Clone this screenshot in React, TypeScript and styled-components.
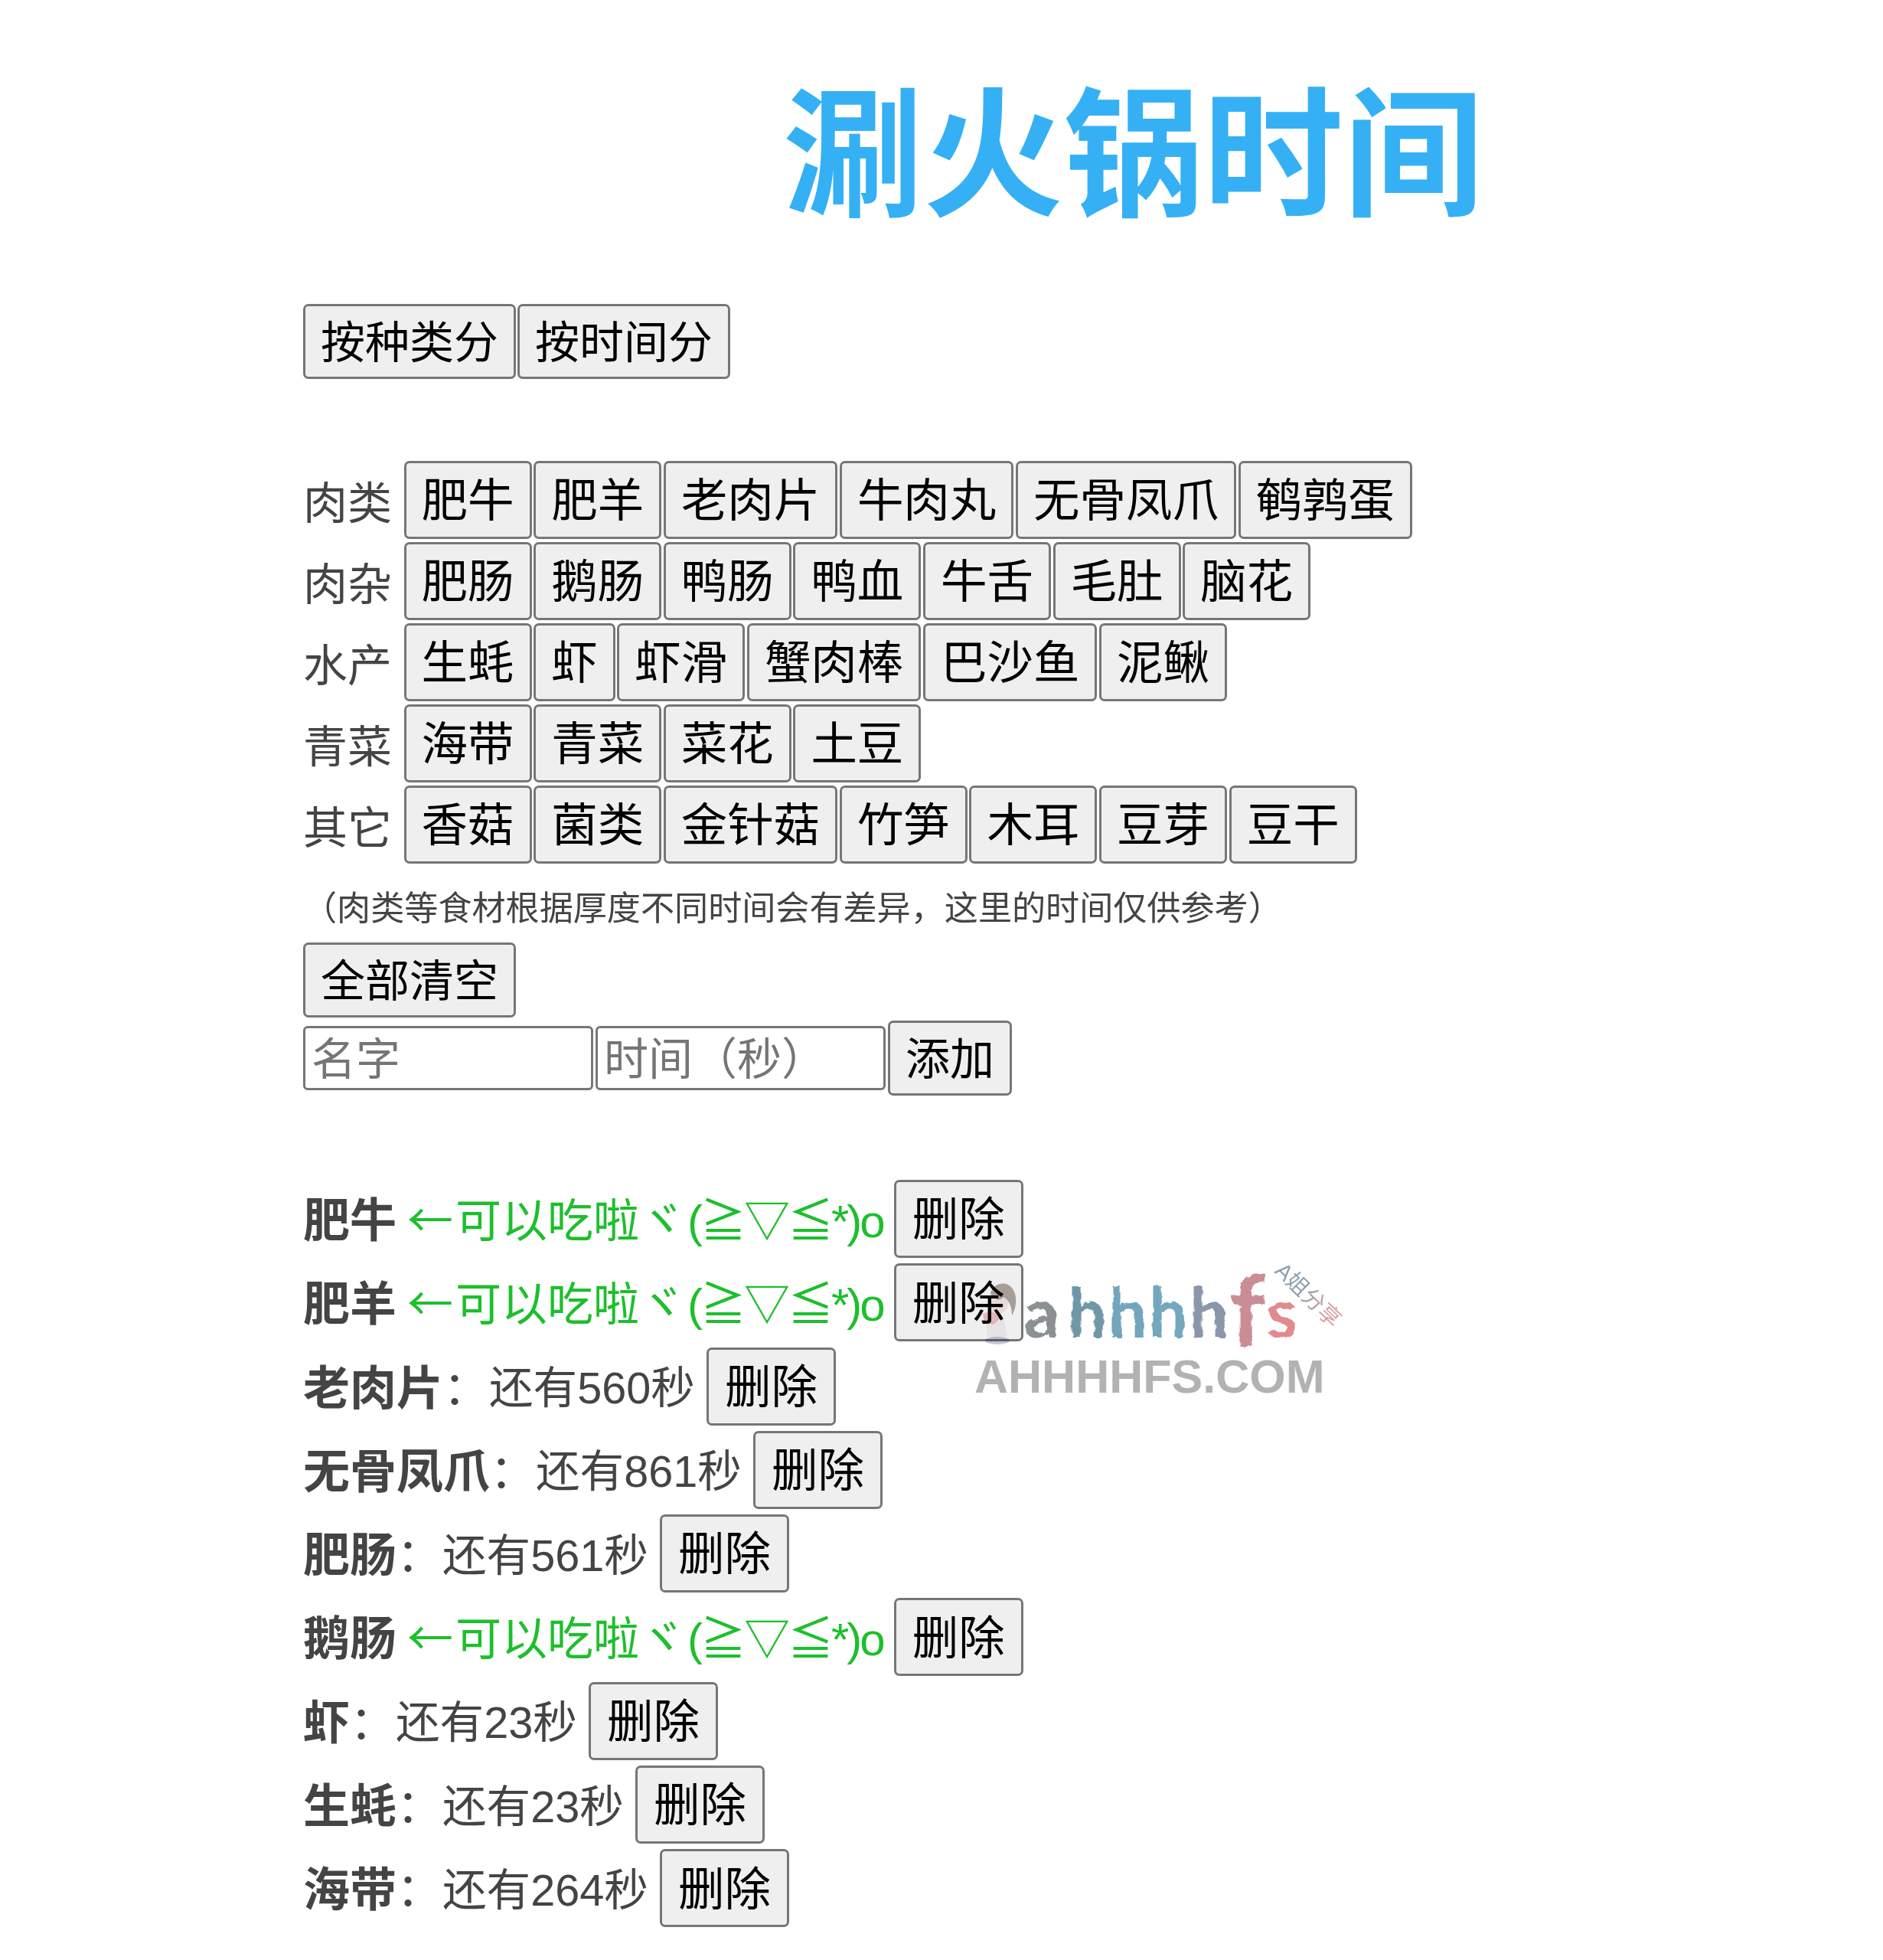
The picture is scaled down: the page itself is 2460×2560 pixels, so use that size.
import React from "react";
import styled, { createGlobalStyle } from "styled-components";

const SANS = `"Liberation Sans", "Noto Sans CJK SC", sans-serif`;

const foodGroups = [
  { label: "肉类", items: ["肥牛", "肥羊", "老肉片", "牛肉丸", "无骨凤爪", "鹌鹑蛋"] },
  { label: "肉杂", items: ["肥肠", "鹅肠", "鸭肠", "鸭血", "牛舌", "毛肚", "脑花"] },
  { label: "水产", items: ["生蚝", "虾", "虾滑", "蟹肉棒", "巴沙鱼", "泥鳅"] },
  { label: "青菜", items: ["海带", "青菜", "菜花", "土豆"] },
  { label: "其它", items: ["香菇", "菌类", "金针菇", "竹笋", "木耳", "豆芽", "豆干"] },
];

const timers = [
  { name: "肥牛" },
  { name: "肥羊" },
  { name: "老肉片", left: 560 },
  { name: "无骨凤爪", left: 861 },
  { name: "肥肠", left: 561 },
  { name: "鹅肠" },
  { name: "虾", left: 23 },
  { name: "生蚝", left: 23 },
  { name: "海带", left: 264 },
];

const brandLetters = [
  { ch: "a", color: "#8b9093", width: 57 },
  { ch: "h", color: "#6f97a8", width: 53 },
  { ch: "h", color: "#73a5bb", width: 53 },
  { ch: "h", color: "#75a7bd", width: 53 },
  { ch: "h", color: "#8a97ab", width: 53 },
  { ch: "f", color: "#cb8d95", width: 48, tall: true },
  { ch: "s", color: "#e08b8d", width: 40 },
];

const App: React.FC = () => {
  return (
    <Page>
      <GlobalStyle />
      <Title>涮火锅时间</Title>

      <Toolbar>
        <Button $size="small">按种类分</Button>
        <Button $size="small">按时间分</Button>
      </Toolbar>

      <FoodTable>
        {foodGroups.map((group) => (
          <FoodRow key={group.label}>
            <FoodLabel>{group.label}</FoodLabel>
            {group.items.map((item) => (
              <Button key={item}>{item}</Button>
            ))}
          </FoodRow>
        ))}
      </FoodTable>

      <Note>（肉类等食材根据厚度不同时间会有差异，这里的时间仅供参考）</Note>

      <ClearRow>
        <Button $size="small">全部清空</Button>
      </ClearRow>

      <AddForm>
        <TextInput placeholder="名字" />
        <TextInput placeholder="时间（秒）" />
        <Button $size="small">添加</Button>
      </AddForm>

      <TimerList>
        {timers.map((timer) => (
          <TimerRow key={timer.name}>
            <TimerName>{timer.name}</TimerName>
            {timer.left === undefined ? (
              <Ready>
                <ReadyArrow>←</ReadyArrow>可以吃啦ヾ<Kaomoji>(≧▽≦*)o</Kaomoji>
              </Ready>
            ) : (
              <>
                <Colon>：</Colon>
                <Remaining>还有{timer.left}秒</Remaining>
              </>
            )}
            <DeleteButton>删除</DeleteButton>
          </TimerRow>
        ))}
      </TimerList>

      <Watermark aria-hidden="true">
        <FilterDefs>
          <filter id="rough">
            <feTurbulence type="fractalNoise" baseFrequency="0.09" numOctaves="2" seed="4" />
            <feDisplacementMap in="SourceGraphic" scale="7" />
          </filter>
        </FilterDefs>
        <Mascot viewBox="0 0 50 84">
          <ellipse cx="25" cy="77" rx="16" ry="5" fill="#b9bdd2" />
          <path d="M10 52 L34 50 L38 72 L12 72 Z" fill="#f4f1f1" />
          <path d="M6 42 L24 36 L31 46 L20 56 L8 54 Z" fill="#eeb4b8" />
          <ellipse cx="26" cy="28" rx="13" ry="14" fill="#f7e6df" />
          <path d="M16 16 C18 2 36 -2 44 8 C52 18 50 34 44 44 C44 32 40 24 33 20 C28 26 22 24 16 16 Z" fill="#a59a92" />
          <circle cx="21" cy="31" r="1.4" fill="#555" />
          <circle cx="31" cy="31" r="1.4" fill="#555" />
        </Mascot>
        <BrandWord>
          {brandLetters.map((letter, i) => (
            <BrandLetter key={i} $color={letter.color} $width={letter.width} $tall={letter.tall}>
              {letter.ch}
            </BrandLetter>
          ))}
        </BrandWord>
        <BrandTag>A姐分享</BrandTag>
        <BrandSite>AHHHHFS.COM</BrandSite>
      </Watermark>
    </Page>
  );
};

const GlobalStyle = createGlobalStyle`
  html, body {
    margin: 0;
    background: #fff;
  }
  body {
    font-family: ${SANS};
    color: #444;
  }
`;

const Page = styled.div`
  position: relative;
  width: 2460px;
  height: 2560px;
  box-sizing: border-box;
  padding: 108px 0 0 396px;
  overflow: hidden;
`;

const Title = styled.h1`
  margin: 0 0 96px 627px;
  font-size: 183px;
  line-height: 193px;
  font-weight: 600;
  color: #35b0f5;
  white-space: nowrap;
`;

const Toolbar = styled.div`
  display: flex;
  gap: 2px;
  margin-bottom: 107px;
`;

const Button = styled.button<{ $size?: "small" }>`
  box-sizing: border-box;
  flex: none;
  height: ${({ $size }) => ($size === "small" ? "98px" : "102px")};
  padding: 3px 20px 0;
  border: 3px solid #767676;
  border-radius: 7px;
  background: #efefef;
  color: #000;
  font-family: ${SANS};
  font-size: ${({ $size }) => ($size === "small" ? "58px" : "60.5px")};
  line-height: 1;
`;

const DeleteButton = styled(Button)`
  margin-left: 15px;
  padding: 3px 21px 0;
`;

const FoodTable = styled.div`
  display: flex;
  flex-direction: column;
  gap: 4px;
`;

const FoodRow = styled.div`
  display: flex;
  align-items: center;
  gap: 2.6px;
`;

const FoodLabel = styled.span`
  width: 129px;
  flex: none;
  font-size: 58px;
  color: #444;
`;

const Note = styled.div`
  margin-top: 27px;
  height: 76px;
  font-size: 44.1px;
  line-height: 64px;
  color: #444;
  white-space: nowrap;
`;

const ClearRow = styled.div`
  display: flex;
`;

const AddForm = styled.div`
  display: flex;
  align-items: center;
  gap: 3px;
  margin-top: 4px;
`;

const TextInput = styled.input`
  box-sizing: border-box;
  width: 379px;
  height: 84px;
  padding: 3px 8px 0;
  border: 3px solid #767676;
  border-radius: 6px;
  background: #fff;
  font-family: ${SANS};
  font-size: 58px;
  color: #000;

  &::placeholder {
    color: #757575;
    opacity: 1;
  }
`;

const TimerList = styled.div`
  display: flex;
  flex-direction: column;
  gap: 7.3px;
  margin-top: 110px;
`;

const TimerRow = styled.div`
  display: flex;
  align-items: center;
  font-size: 60px;
  white-space: nowrap;
`;

const TimerName = styled.strong`
  margin-bottom: 5px;
  font-size: 61px;
  font-weight: 700;
  color: #444;
`;

const Colon = styled.span`
  margin-bottom: 5px;
  color: #444;
`;

const Remaining = styled.span`
  margin-bottom: 5px;
  font-size: 57.6px;
  color: #444;
`;

const Ready = styled.span`
  margin: 0 -1px 5px 14px;
  color: #1dbf2c;
`;

const ReadyArrow = styled.span`
  margin-right: 3px;
  font-family: "Noto Sans CJK SC", sans-serif;
`;

const Kaomoji = styled.span`
  margin-left: 3px;
  letter-spacing: -3px;
`;

const Watermark = styled.div`
  position: absolute;
  left: 1270px;
  top: 1650px;
  width: 500px;
  height: 190px;
  pointer-events: none;
`;

const FilterDefs = styled.svg`
  position: absolute;
  width: 0;
  height: 0;
`;

const Mascot = styled.svg`
  position: absolute;
  left: 8px;
  top: 24px;
  width: 50px;
  height: 84px;
  opacity: 0.85;
  mix-blend-mode: multiply;
`;

const BrandWord = styled.div`
  position: absolute;
  left: 68px;
  top: -3px;
  display: flex;
  align-items: baseline;
  font-family: "Lato", sans-serif;
  font-size: 90px;
  line-height: 100px;
  font-weight: 700;
  filter: url(#rough);
`;

const BrandLetter = styled.span<{ $color: string; $width: number; $tall?: boolean }>`
  width: ${({ $width }) => $width}px;
  color: ${({ $color }) => $color};
  font-size: ${({ $tall }) => ($tall ? "130px" : "inherit")};
  transform: ${({ $tall }) => ($tall ? "translateY(12px)" : "none")};
`;

const BrandTag = styled.span`
  position: absolute;
  left: 388px;
  top: 18px;
  font-size: 29px;
  background: linear-gradient(90deg, #8aa0ad 40%, #d9a0a5 85%);
  -webkit-background-clip: text;
  background-clip: text;
  color: transparent;
  transform: rotate(44deg);
  white-space: nowrap;
`;

const BrandSite = styled.div`
  position: absolute;
  left: 3px;
  top: 113px;
  font-size: 61px;
  line-height: 70px;
  font-weight: 700;
  color: #b2b2b2;
  white-space: nowrap;
`;

export default App;
